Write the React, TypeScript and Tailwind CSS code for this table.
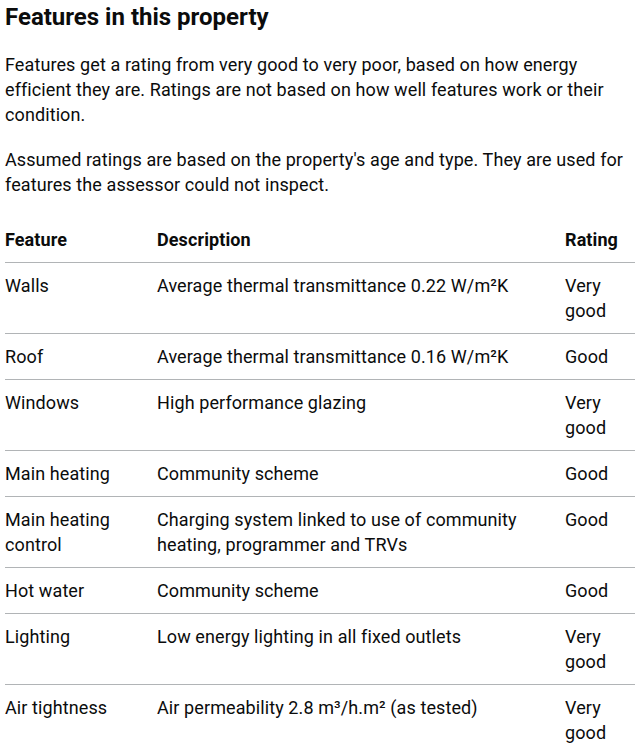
import React from 'react'

type Feature = {
  name: React.ReactNode
  description: React.ReactNode
  rating: string
}

const features: Feature[] = [
  { name: 'Walls', description: 'Average thermal transmittance 0.22 W/m²K', rating: 'Very good' },
  { name: 'Roof', description: 'Average thermal transmittance 0.16 W/m²K', rating: 'Good' },
  { name: 'Windows', description: 'High performance glazing', rating: 'Very good' },
  { name: 'Main heating', description: 'Community scheme', rating: 'Good' },
  {
    name: 'Main heating control',
    description: (
      <>
        Charging system linked to use of community
        <br />
        heating, programmer and TRVs
      </>
    ),
    rating: 'Good',
  },
  { name: 'Hot water', description: 'Community scheme', rating: 'Good' },
  { name: 'Lighting', description: 'Low energy lighting in all fixed outlets', rating: 'Very good' },
  { name: 'Air tightness', description: 'Air permeability 2.8 m³/h.m² (as tested)', rating: 'Very good' },
]

export default function App() {
  return (
    <div className="min-h-screen bg-white pl-[5px] pt-[2px] font-['Roboto',sans-serif] text-[18px] leading-[25px] tracking-[0.1px] text-[#0b0c0c]">
      <h2 className="mb-[20px] text-[24px] font-bold leading-[30px] tracking-normal">Features in this property</h2>

      <p className="mb-[20px]">
        Features get a rating from very good to very poor, based on how energy efficient they are. Ratings are not based on how well features work or their condition.
      </p>
      <p className="mb-[20px]">
        Assumed ratings are based on the property's age and type. They are used for features the assessor could not inspect.
      </p>

      <table className="w-[630px] table-fixed border-collapse text-left">
        <colgroup>
          <col className="w-[152px]" />
          <col className="w-[408px]" />
          <col className="w-[70px]" />
        </colgroup>
        <thead>
          <tr className="border-b border-[#b1b4b6]">
            <th className="py-[10px] pr-[20px] align-top font-bold">Feature</th>
            <th className="py-[10px] pr-[20px] align-top font-bold">Description</th>
            <th className="py-[10px] align-top font-bold">Rating</th>
          </tr>
        </thead>
        <tbody>
          {features.map((f, i) => (
            <tr key={i} className="border-b border-[#b1b4b6]">
              <td className="py-[10px] pr-[20px] align-top">{f.name}</td>
              <td className="py-[10px] pr-[20px] align-top">{f.description}</td>
              <td className="py-[10px] align-top">{f.rating}</td>
            </tr>
          ))}
        </tbody>
      </table>
    </div>
  )
}
